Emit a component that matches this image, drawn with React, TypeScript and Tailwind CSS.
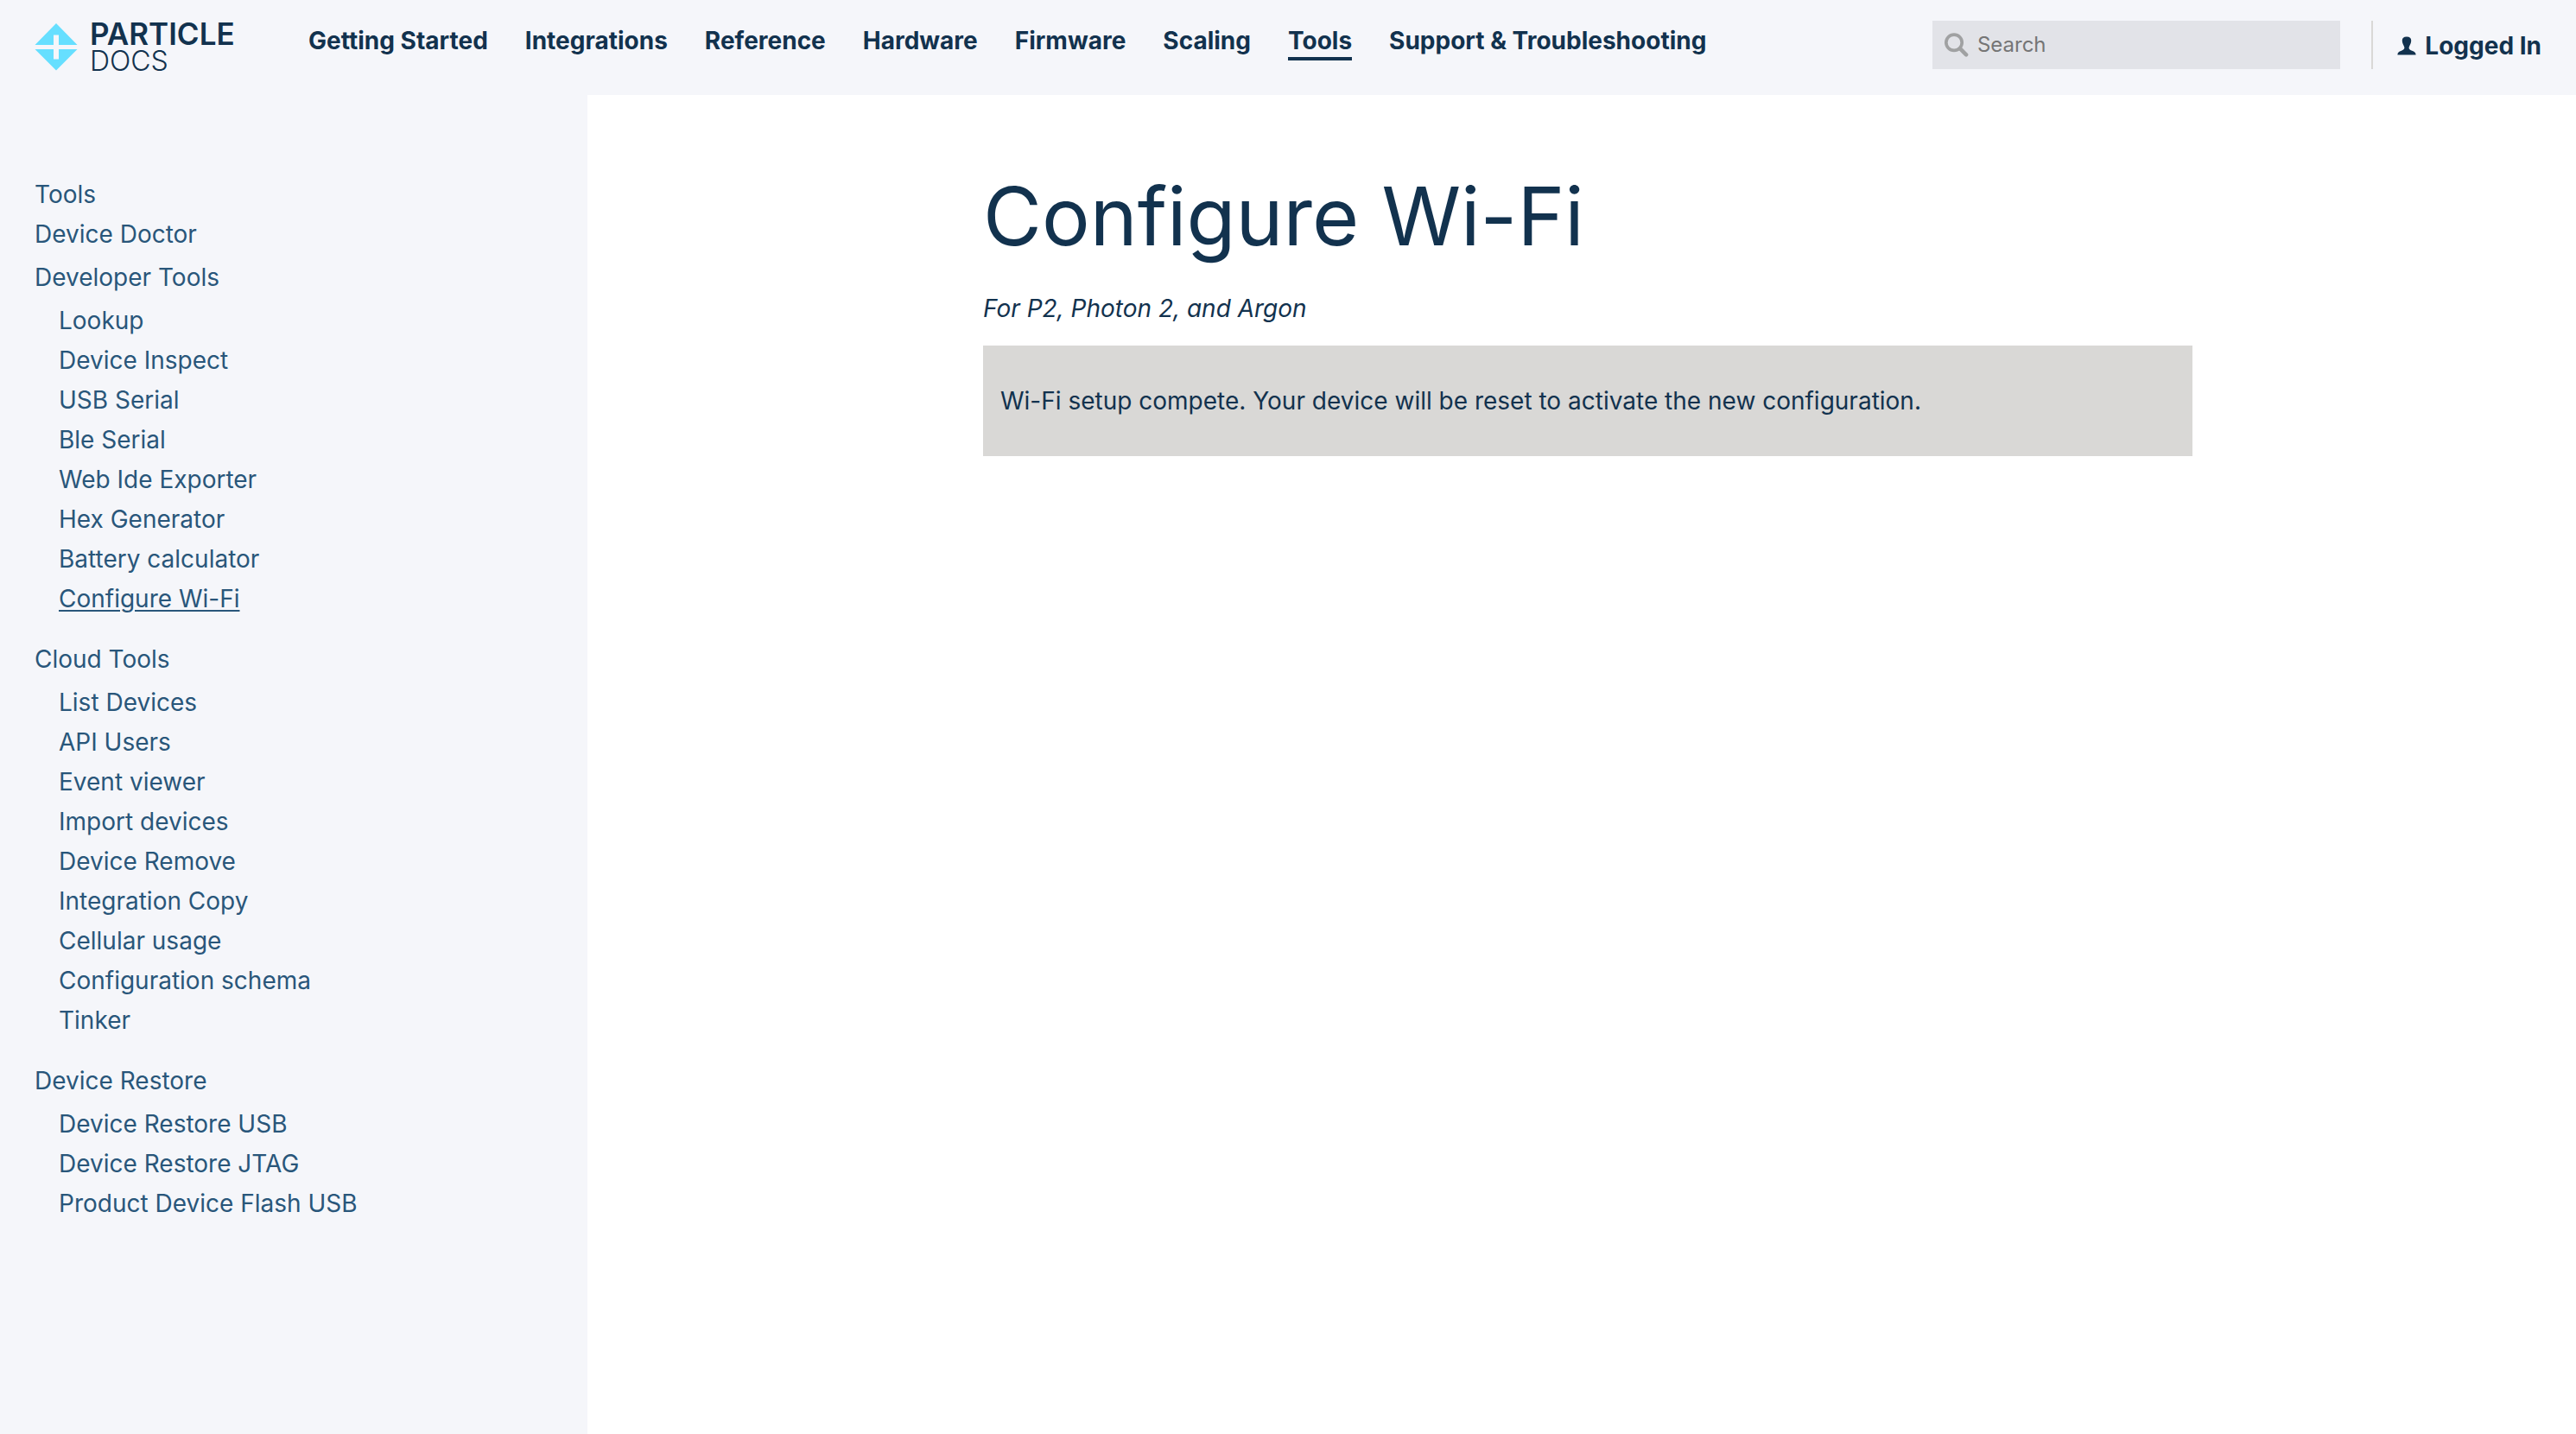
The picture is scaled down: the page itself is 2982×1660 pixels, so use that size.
const navItems = [
  "Getting Started",
  "Integrations",
  "Reference",
  "Hardware",
  "Firmware",
  "Scaling",
  "Tools",
  "Support & Troubleshooting",
];

const sections = [
  {
    title: "Developer Tools",
    items: [
      "Lookup",
      "Device Inspect",
      "USB Serial",
      "Ble Serial",
      "Web Ide Exporter",
      "Hex Generator",
      "Battery calculator",
      "Configure Wi-Fi",
    ],
  },
  {
    title: "Cloud Tools",
    items: [
      "List Devices",
      "API Users",
      "Event viewer",
      "Import devices",
      "Device Remove",
      "Integration Copy",
      "Cellular usage",
      "Configuration schema",
      "Tinker",
    ],
  },
  {
    title: "Device Restore",
    items: ["Device Restore USB", "Device Restore JTAG", "Product Device Flash USB"],
  },
];

function Logo() {
  return (
    <a href="#home" className="flex w-[317px] shrink-0 items-center gap-[14px]">
      <svg viewBox="0 0 50 56" className="h-14 w-[50px]" aria-hidden="true">
        <path d="M25 1 L49.5 26 H28 V14.5 H22 V26 H0.5 Z" fill="#66dfff" />
        <path d="M0.5 31 H22 V42.5 H28 V31 H49.5 L25 55.5 Z" fill="#66dfff" />
      </svg>
      <span className="flex flex-col pt-[2px] leading-8">
        <span className="text-[35px] font-semibold">PARTICLE</span>
        <span className="text-[32px] font-light">DOCS</span>
      </span>
    </a>
  );
}

function Header() {
  return (
    <header className="flex h-[110px] items-start bg-[#f5f6fa] pr-10 pl-10">
      <div className="flex h-[108px] items-center">
        <Logo />
      </div>
      <nav className="flex gap-[43px] pt-[29px] text-[28px] leading-9 font-bold whitespace-nowrap">
        {navItems.map((item) => (
          <a
            key={item}
            href="#nav"
            className={
              item === "Tools"
                ? "border-b-4 border-[#12324e] pb-px"
                : "border-b-4 border-transparent pb-px"
            }
          >
            {item}
          </a>
        ))}
      </nav>
      <div className="ml-auto flex items-center pt-6">
        <label className="flex h-14 w-[472px] items-center gap-[10px] bg-[#e2e3e8] pl-[14px]">
          <svg viewBox="0 0 30 30" className="size-[30px]" fill="none" stroke="#a0a1a2" aria-hidden="true">
            <circle cx="12" cy="12" r="10" strokeWidth="4" />
            <path d="M19.5 19.5 L27.3 27.3" strokeWidth="5" strokeLinecap="round" />
          </svg>
          <input
            type="search"
            aria-label="Search"
            placeholder="Search"
            className="w-full bg-transparent text-2xl outline-none placeholder:text-[#757575]"
          />
        </label>
        <span className="ml-9 h-14 w-[2px] bg-[#d9d8d6]" />
        <button
          type="button"
          className="ml-[28px] flex items-center gap-[10px] pt-[2px] text-[28px] leading-9 font-bold whitespace-nowrap"
        >
          <svg viewBox="0 0 22 22" className="size-[22px]" fill="#12324e" aria-hidden="true">
            <path d="M11 0.5 C14.8 0.5 16.4 2.4 16.2 5.5 C16 8.8 14.2 10.6 13.6 13 C13.4 17.4 21.6 15.8 21.6 21.5 H0.4 C0.4 15.8 8.6 17.4 8.4 13 C7.8 10.6 6 8.8 5.8 5.5 C5.6 2.4 7.2 0.5 11 0.5 Z" />
          </svg>
          Logged In
        </button>
      </div>
    </header>
  );
}

function Sidebar() {
  return (
    <aside className="w-[680px] shrink-0 bg-[#f5f6fa] pt-[92px] pl-10 text-[28px] leading-[46px] text-[#29567a]">
      <a href="#tools" className="block">
        Tools
      </a>
      <a href="#doctor" className="block">
        Device Doctor
      </a>
      <div className="mt-1 flex flex-col gap-6">
        {sections.map((section) => (
          <section key={section.title}>
            <h2 className="mb-1">{section.title}</h2>
            <ul className="pl-7">
              {section.items.map((item) => (
                <li key={item}>
                  <a
                    href="#item"
                    className={
                      item === "Configure Wi-Fi"
                        ? "underline decoration-2 underline-offset-3"
                        : ""
                    }
                  >
                    {item}
                  </a>
                </li>
              ))}
            </ul>
          </section>
        ))}
      </div>
    </aside>
  );
}

export default function App() {
  return (
    <div className="flex min-h-screen flex-col bg-white font-[Inter,sans-serif] text-[#12324e]">
      <Header />
      <div className="flex flex-1">
        <Sidebar />
        <main className="flex flex-1 justify-center pt-[82px] pl-[14px]">
          <div className="w-full max-w-[1400px]">
            <h1 className="text-[93px] leading-[116px]">Configure Wi-Fi</h1>
            <p className="mt-[29px] text-[28px] leading-10 italic">For P2, Photon 2, and Argon</p>
            <div className="mt-[23px] bg-[#d9d8d6] px-5 py-11 text-[28px] leading-10">
              Wi-Fi setup compete. Your device will be reset to activate the new configuration.
            </div>
          </div>
        </main>
      </div>
    </div>
  );
}
